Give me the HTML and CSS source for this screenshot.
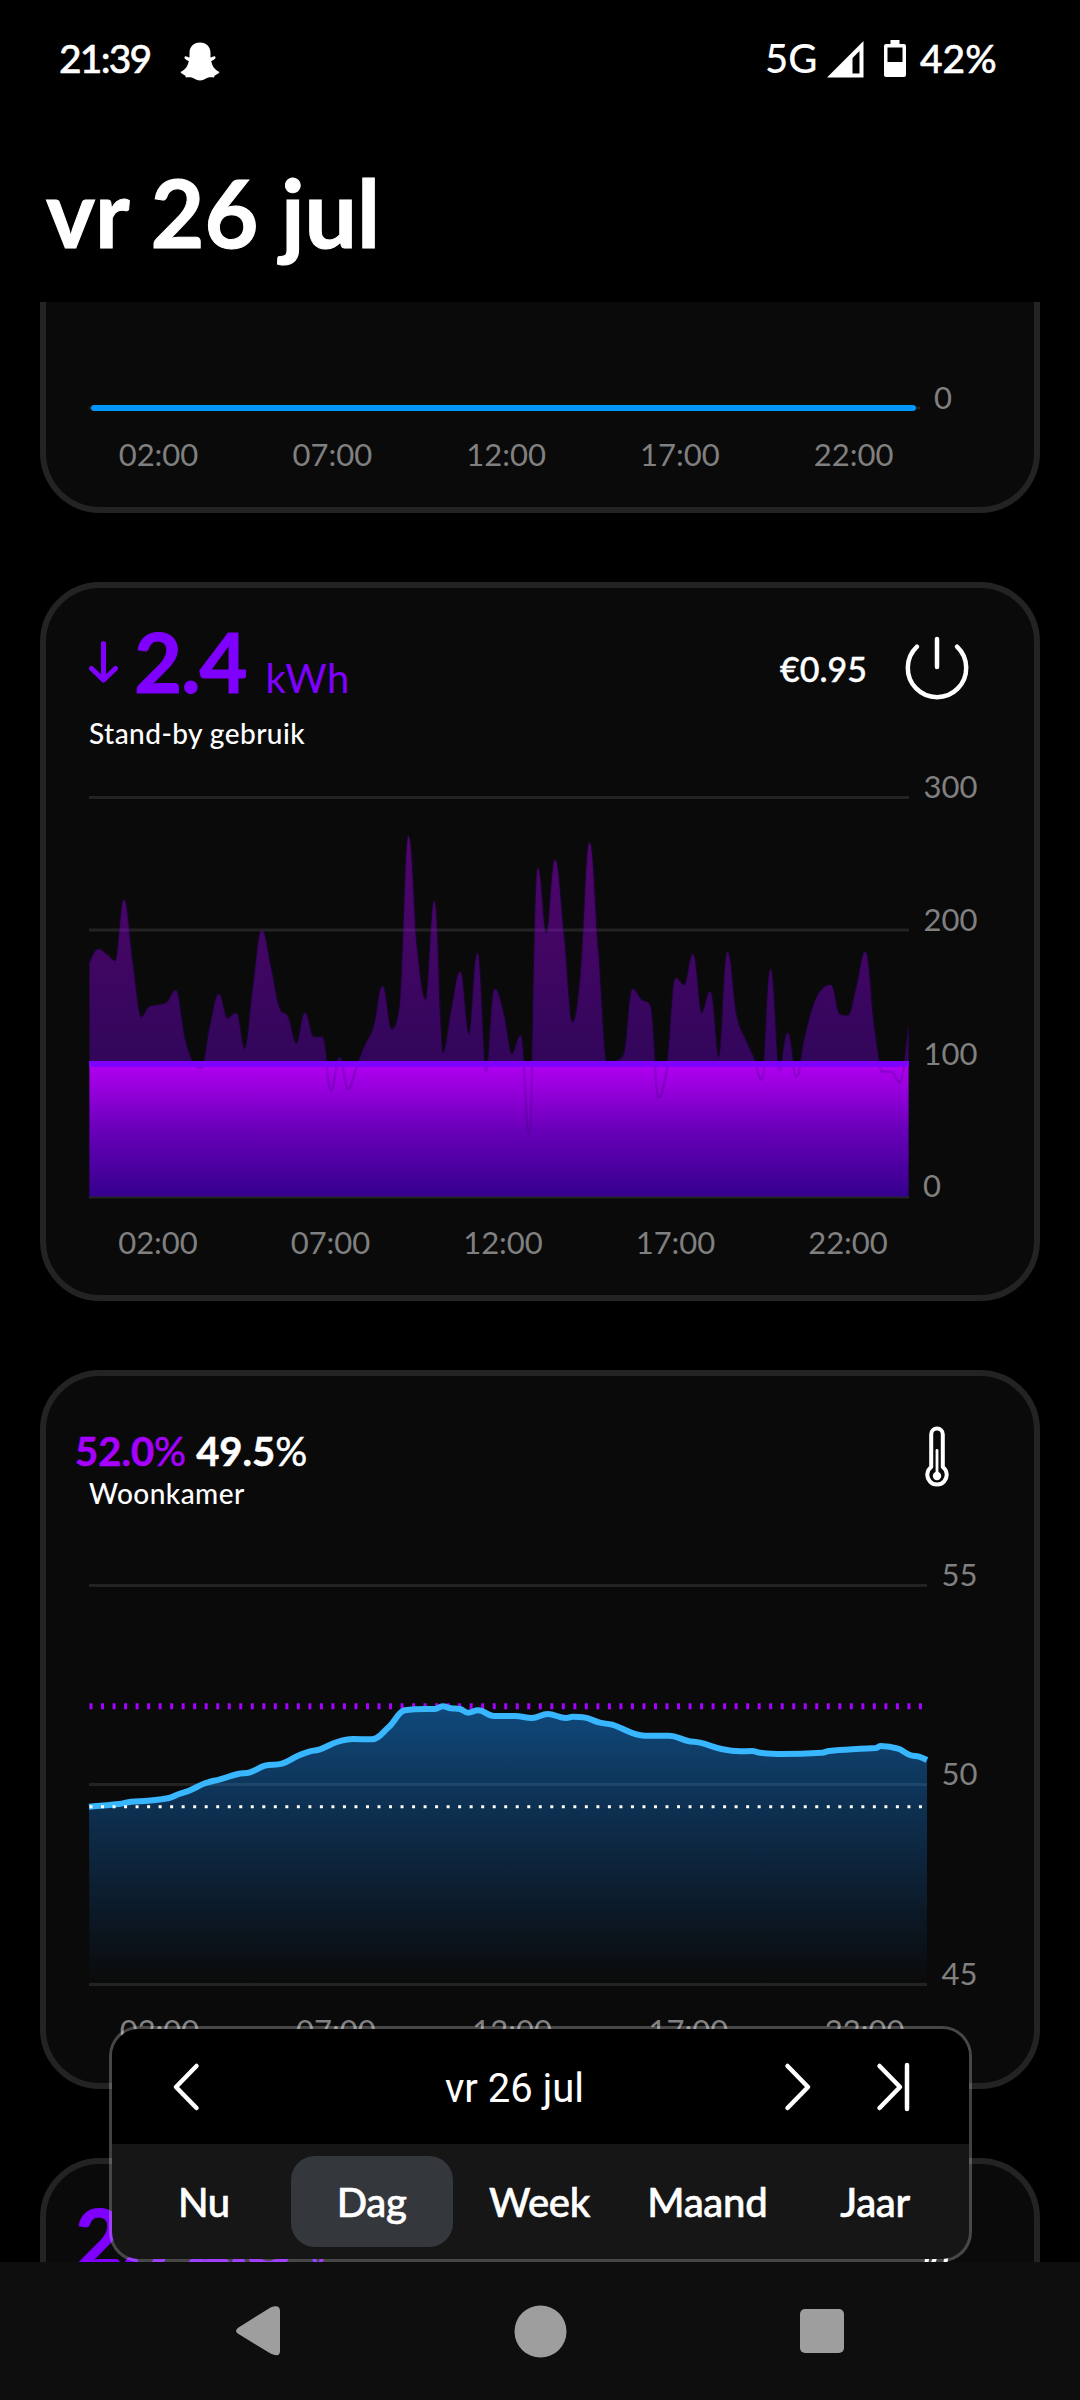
FILE: index.html
```html
<!doctype html>
<html lang="nl">
  <head>
    <meta charset="utf-8">
    <title>vr 26 jul</title>
    <link rel="stylesheet" href="styles.css">
  </head>

  <body>
    <header class="header">
      <div class="status">
        <span class="clock">21:39</span>
        <svg class="ghost" width="40" height="39" viewBox="0 0 40 39">
          <path d="M20 0.5C26.500 0.500 30.500 5 30.500 11V15.500C32 15.500 34 13.800 35 14.500C36.600 16 34.500 17.600 31.300 19C32 23.500 34 27.500 39.500 30C38.500 32.500 34.500 32.200 34 35.500C31 35 28.500 35 26 36.500C22 39 18 39 14 36.500C11.500 35 9 35 6 35.500C5.500 32.200 1.500 32.500 0.500 30C6 27.500 8 23.500 8.700 19C5.500 17.600 3.400 16 5 14.500C6 13.800 8 15.500 9.500 15.500V11C9.500 5 13.500 0.500 20 0.500Z" fill="#fff"/>
        </svg>
        <span class="network">5G</span>
        <svg class="signal" width="37" height="37" viewBox="0 0 37 37">
          <path d="M36.500 0V36.500H0ZM32.500 10L25.500 17V32.500H32.500Z" fill="#fff" fill-rule="evenodd"/>
        </svg>
        <svg class="battery" width="22" height="37" viewBox="0 0 22 37">
          <path d="M6.500 0H15.500V4H20Q22 4 22 6V35Q22 37 20 37H2Q0 37 0 35V6Q0 4 2 4H6.500ZM3.500 7.500V22H18.500V7.500Z" fill="#fff" fill-rule="evenodd"/>
        </svg>
        <span class="percent">42%</span>
      </div>
      <h1 class="title">vr 26 jul</h1>
    </header>

    <main class="feed">
      <section class="card card-cut">
        <svg class="flat-chart" width="880" height="205" viewBox="0 0 880 205">
          <path class="grid" d="M0 106H831"/>
          <path class="flat-line" d="M5 106H824"/>
          <g class="axis">
            <text x="845" y="106.500">0</text>
          </g>
          <g class="axis axis-x">
            <text x="69.500" y="163.500">02:00</text>
            <text x="243.300" y="163.500">07:00</text>
            <text x="417.100" y="163.500">12:00</text>
            <text x="590.900" y="163.500">17:00</text>
            <text x="764.700" y="163.500">22:00</text>
          </g>
        </svg>
      </section>

      <section class="card">
        <div class="card-head">
          <div>
            <div class="value">
              <svg class="arrow" width="29" height="42" viewBox="0 0 29 42">
                <path d="M14.500 2.500V39M2.500 27.500L14.500 39L26.500 27.500"/>
              </svg>
              <span class="number">2.4</span>
              <span class="unit">kWh</span>
            </div>
            <div class="name">Stand-by gebruik</div>
          </div>
          <div class="cost">
            <span class="price">€0.95</span>
            <svg class="icon" width="64" height="64" viewBox="0 0 64 64">
              <path d="M32 3V31M12 10.700A29.200 29.200 0 1 0 52 10.700"/>
            </svg>
          </div>
        </div>
        <svg class="chart" width="880" height="500" viewBox="0 0 880 500">
          <defs>
            <linearGradient id="usage-fill" gradientUnits="userSpaceOnUse" x1="0" y1="66" x2="0" y2="427">
              <stop offset="0" stop-color="#b400f0"/>
              <stop offset="1" stop-color="#3c00b4"/>
            </linearGradient>
            <linearGradient id="base-fill" x1="0" y1="0" x2="0" y2="1">
              <stop offset="0" stop-color="#b200f2"/>
              <stop offset="0.500" stop-color="#6900b9"/>
              <stop offset="1" stop-color="#35008d"/>
            </linearGradient>
          </defs>
          <path class="grid" d="M0 27.500H820M0 160H820M0 427H820"/>
          <path id="usage" fill="url(#usage-fill)" opacity="0.420"/>
          <rect x="0.500" y="294" width="819" height="132" fill="url(#base-fill)"/>
          <path id="usage-edge" class="usage-edge"/>
          <path class="base-line" d="M0 294H820"/>
          <g class="axis">
            <text x="834.500" y="27.500">300</text>
            <text x="834.500" y="160.800">200</text>
            <text x="834.500" y="294.500">100</text>
            <text x="834" y="427">0</text>
          </g>
          <g class="axis axis-x">
            <text x="69" y="483.700">02:00</text>
            <text x="241.500" y="483.700">07:00</text>
            <text x="414" y="483.700">12:00</text>
            <text x="586.500" y="483.700">17:00</text>
            <text x="759" y="483.700">22:00</text>
          </g>
        </svg>
      </section>

      <section class="card">
        <div class="card-head">
          <div class="humidity">
            <div class="range">
              <span class="max"><b>52.0</b>%</span>
              <span class="min"><b>49.5</b>%</span>
            </div>
            <div class="name">Woonkamer</div>
          </div>
          <svg class="icon thermometer" width="24" height="62" viewBox="0 0 24 62">
            <path d="M6.200 41V8.300A5.800 5.800 0 0 1 17.800 8.300V41A9.700 9.700 0 1 1 6.200 41Z"/>
            <path class="mercury" d="M12 24.500V50"/>
            <circle cx="12" cy="50" r="4.200" fill="#fff" stroke="none"/>
          </svg>
        </div>
        <svg class="chart" width="880" height="500" viewBox="0 0 880 500">
          <defs>
            <linearGradient id="humidity-fill" x1="0" y1="0" x2="0" y2="1">
              <stop offset="0" stop-color="#158ef8" stop-opacity="0.480"/>
              <stop offset="0.500" stop-color="#1581ea" stop-opacity="0.250"/>
              <stop offset="1" stop-color="#1581ea" stop-opacity="0"/>
            </linearGradient>
          </defs>
          <path class="grid" d="M0 27.500H838M0 226.500H838M0 426.500H838"/>
          <path id="humidity" fill="url(#humidity-fill)"/>
          <path class="dots dots-max" d="M0.500 148.300H838"/>
          <path id="humidity-line" class="humidity-line"/>
          <path class="dots dots-min" d="M0.500 248.700H838"/>
          <g class="axis">
            <text x="852.500" y="27.700">55</text>
            <text x="852.500" y="227">50</text>
            <text x="852.500" y="426.800">45</text>
          </g>
          <g class="axis axis-x">
            <text x="70.500" y="483.700">02:00</text>
            <text x="246.800" y="483.700">07:00</text>
            <text x="423.100" y="483.700">12:00</text>
            <text x="599.400" y="483.700">17:00</text>
            <text x="775.700" y="483.700">22:00</text>
          </g>
        </svg>
      </section>

      <section class="card">
        <div class="card-head">
          <div class="value value-wide">
            <span class="number">2.<span class="rest">72.8</span></span>
            <span class="unit">V</span>
          </div>
          <svg class="tail" width="28" height="18" viewBox="0 0 28 18">
            <path d="M3 18L6 0M9 18L17 0M22 18L25 0"/>
          </svg>
        </div>
      </section>

      <div class="picker">
        <div class="picker-date">
          <svg class="icon" width="28" height="50" viewBox="0 0 28 50">
            <path d="M24.500 4L4 25L24.500 46"/>
          </svg>
          <span class="date">vr 26 jul</span>
          <svg class="icon next" width="28" height="50" viewBox="0 0 28 50">
            <path d="M3.500 4L24 25L3.500 46"/>
          </svg>
          <svg class="icon" width="35" height="50" viewBox="0 0 35 50">
            <path d="M3.500 4L24 25L3.500 46M31 3V47"/>
          </svg>
        </div>
        <nav class="tabs">
          <a class="tab">Nu</a>
          <a class="tab active">Dag</a>
          <a class="tab">Week</a>
          <a class="tab">Maand</a>
          <a class="tab">Jaar</a>
        </nav>
      </div>
    </main>

    <footer class="navbar">
      <svg width="46" height="52" viewBox="0 0 46 52">
        <path d="M3.500 22.500L35.500 2.500Q45 -1 45 6V46Q45 53 35.500 48.500L3.500 29Q-1.500 26 3.500 22.500Z"/>
      </svg>
      <svg width="53" height="53" viewBox="0 0 53 53">
        <circle cx="26.500" cy="26.500" r="26"/>
      </svg>
      <svg width="44" height="44" viewBox="0 0 44 44">
        <rect width="44" height="44" rx="5"/>
      </svg>
    </footer>

    <script src="chart.js"></script>
  </body>
</html>
```

FILE: styles.css
```css
html {
  background: #000;
  color: #fff;
  font-family: "Lato", sans-serif;
}

body, h1 { margin: 0; }

body {
  width: 1080px;
  height: 2400px;
  display: flex;
  flex-direction: column;
  overflow: hidden;
}

svg {
  display: block;
  flex: none;
}

.header {
  height: 302px;
  box-sizing: border-box;
  padding-top: 34px;
}

.status {
  display: flex;
  align-items: flex-start;
  height: 121px;
  padding: 0 80px 0 59px;
  font-size: 39px;
  line-height: 48px;
  font-weight: 500;
  -webkit-text-stroke: 0.5px #fff;
}

.clock { letter-spacing: -1.8px; width: 121px; }
.ghost { margin-top: 8px; }
.network { margin-left: auto; width: 62px; font-size: 40px; -webkit-text-stroke: 0; }
.signal { margin-top: 7px; }
.battery { margin: 6px 14px 0 20px; }
.percent { width: 80px; }

.title {
  padding-left: 46px;
  font-size: 93px;
  line-height: 114px;
  font-weight: 700;
  -webkit-text-stroke: 1px #fff;
}

.feed {
  position: relative;
  height: 1960px;
  overflow: hidden;
}

.card {
  box-sizing: border-box;
  width: 1000px;
  height: 719px;
  margin: 0 auto 69px;
  padding: 0 65px 0 43px;
  background: #0a0a0a;
  border: 6px solid #232323;
  border-radius: 60px;
}

/* first card is scrolled under the header */
.card-cut {
  height: 211px;
  border-top: 0;
  border-radius: 0 0 60px 60px;
}

.card-head {
  display: flex;
  justify-content: space-between;
  align-items: flex-start;
  height: 182px;
}

.value {
  display: flex;
  align-items: baseline;
  margin-top: 22px;
  color: #7f00ff;
}

.arrow {
  align-self: flex-start;
  margin: 31px 16px 0 0;
  fill: none;
  stroke: #7f00ff;
  stroke-width: 5;
  stroke-linecap: round;
  stroke-linejoin: round;
}

.number {
  font-size: 83px;
  line-height: 102px;
  font-weight: 700;
  letter-spacing: -1.2px;
  -webkit-text-stroke: 1px #7f00ff;
}

.unit {
  margin-left: 19px;
  font-size: 40px;
  letter-spacing: 0.4px;
}

.name {
  margin-top: 4px;
  font-size: 28px;
  line-height: 34px;
  font-weight: 500;
  letter-spacing: 0.45px;
}

.cost {
  display: flex;
  align-items: center;
  gap: 38px;
  margin-top: 48px;
  font-size: 34px;
  line-height: 40px;
  font-weight: 500;
}

.price {
  padding-top: 2px;
  -webkit-text-stroke: 0.4px #fff;
}

.icon {
  fill: none;
  stroke: #fff;
  stroke-width: 4.5;
  stroke-linecap: round;
  stroke-linejoin: round;
}

.humidity { margin-top: 51px; }
.humidity .name { margin-top: 1px; }

.range {
  display: flex;
  gap: 10px;
  margin-left: -14px;
  font-size: 40px;
  line-height: 48px;
  -webkit-text-stroke: 0.5px;
}

.max { color: #a600ff; }

.thermometer { margin: 50px 20px 0 0; stroke-width: 4; }
.thermometer .mercury { stroke-width: 2.8; }

.value-wide { margin-left: -14px; }
.value-wide .unit { margin-left: 16px; }
.rest { letter-spacing: -4px; }

.tail {
  margin: 83px 18px 0 0;
  fill: none;
  stroke: #fff;
  stroke-width: 4;
}

/* charts */
.flat-chart, .chart { overflow: visible; }
.grid { stroke: #232323; stroke-width: 3; }
.flat-line { stroke: #0095ff; stroke-width: 6; stroke-linecap: round; }
.base-line { stroke: #7f00ff; stroke-width: 6; }
.usage-edge { fill: none; stroke: #3c0078; stroke-width: 2.5; opacity: 0.25; }
.humidity-line { fill: none; stroke: #38b6ff; stroke-width: 6; stroke-linejoin: round; }
.dots { stroke-dasharray: 3 8.52; }
.dots-max { stroke: #a600ff; stroke-width: 6; }
.dots-min { stroke: #fff; stroke-width: 3; }
.axis { fill: #808080; font-size: 31px; }
.axis-x { text-anchor: middle; }

/* date picker floats over the feed */
.picker {
  position: absolute;
  left: 109px;
  bottom: 0;
  box-sizing: border-box;
  width: 863px;
  height: 236px;
  border: 3px solid rgba(255, 255, 255, 0.25);
  border-radius: 30px;
  background: #161616;
  background-clip: padding-box;
  overflow: hidden;
}

.picker-date {
  display: flex;
  align-items: center;
  height: 115px;
  padding: 0 58px 0 60px;
  background: #000;
}

.date {
  flex: 1;
  padding: 3px 0 0 45px;
  text-align: center;
  font-family: "Roboto", sans-serif;
  font-size: 40px;
}

.next { margin-right: 64px; }

.tabs {
  display: flex;
  gap: 6px;
  height: 115px;
  box-sizing: border-box;
  padding: 12px 13px 12px 11px;
}

.tab {
  flex: 1;
  border-radius: 24px;
  text-align: center;
  font-size: 40px;
  line-height: 93px;
  font-weight: 500;
  letter-spacing: -0.3px;
  -webkit-text-stroke: 0.6px #fff;
}

.tab.active { background: #34373c; }

.navbar {
  display: flex;
  justify-content: space-between;
  align-items: center;
  height: 138px;
  box-sizing: border-box;
  padding: 0 236px 0 235px;
  background: #0e0e0e;
  fill: #9e9e9e;
}
```

FILE: chart.js
```js
// watts per quarter of an hour
const usage = [
  175, 186, 182, 177, 223, 175, 135, 143, 144, 146, 155, 120, 101, 97, 128, 152,
  134, 138, 111, 158, 200, 173, 142, 135, 115, 138, 120, 120, 80, 105, 81, 98,
  114, 128, 158, 126, 143, 271, 185, 148, 222, 108, 140, 169, 122, 183, 94, 156,
  138, 107, 121, 47, 247, 198, 253, 197, 131, 168, 266, 184, 101, 102, 107, 156,
  148, 144, 75, 98, 164, 159, 182, 138, 154, 105, 184, 137, 119, 105, 88, 171,
  95, 123, 90, 120, 144, 156, 159, 137, 136, 158, 184, 127, 94, 94, 86, 128
];

const humidity = [
  [0, 248.7], [11, 247.7], [30, 246], [42, 243.7], [59, 242.7], [80, 240],
  [90, 236], [100, 232.7], [116, 225.3], [131, 221.3], [149, 216], [161, 214.3],
  [176, 207.7], [193, 205.7], [209, 197.7], [221, 193.3], [231, 191.3],
  [248, 184], [264, 181], [283, 181.3], [300, 168.7], [315.6, 152.3],
  [338, 151], [346, 151], [353.5, 148.3], [362, 150.3], [371, 151],
  [379, 154.7], [389, 152.3], [405, 158], [426, 158], [443, 160], [458.6, 156],
  [477, 160], [484, 158.7], [494, 159.3], [511, 164.7], [523, 166.7],
  [556, 177.7], [580, 177.7], [599, 183], [611, 184.7], [633.5, 191.3],
  [651, 193.3], [663, 193], [671, 194.7], [692, 196], [733, 194.7],
  [740, 193], [771, 190.7], [787, 190], [792, 188], [809, 190.7],
  [821, 197], [830, 198.7], [838, 202]
];

// spline whose control points never go past the neighbouring values
function curve(p) {
  const n = p.length;
  let d = "M" + p[0].join(" ");
  let out = p[0];
  for (let i = 1; i < n; i++) {
    const [x, y] = p[i];
    let left = [x, y], right = [x, y];
    if (i < n - 1) {
      const a = p[i - 1], b = p[i + 1];
      const lx = (1.5 * x + a[0]) / 2.5, rx = (1.5 * x + b[0]) / 2.5;
      let ly = (1.5 * y + a[1]) / 2.5, ry = (1.5 * y + b[1]) / 2.5;
      const fix = (ry - ly) * (rx - x) / (rx - lx) + y - ry;
      ly += fix;
      ry += fix;
      const lmax = Math.max(a[1], y), lmin = Math.min(a[1], y);
      if (ly > lmax || ly < lmin) {
        ly = ly > lmax ? lmax : lmin;
        ry = 2 * y - ly;
      }
      const rmax = Math.max(b[1], y), rmin = Math.min(b[1], y);
      if (ry > rmax || ry < rmin) {
        ry = ry > rmax ? rmax : rmin;
        ly = 2 * y - ry;
      }
      left = [lx, ly];
      right = [rx, ry];
    }
    d += "C" + [...out, ...left, x, y].join(" ");
    out = right;
  }
  return d;
}

function draw(id, d) {
  document.getElementById(id).setAttribute("d", d);
}

const u = curve(usage.map((w, i) => [0.5 + i * 819 / 95, 427 - w * 1.332]));
draw("usage", u + "V427H0.5Z");
draw("usage-edge", u);

const h = curve(humidity);
draw("humidity", h + "V426H0.5Z");
draw("humidity-line", h);
```
